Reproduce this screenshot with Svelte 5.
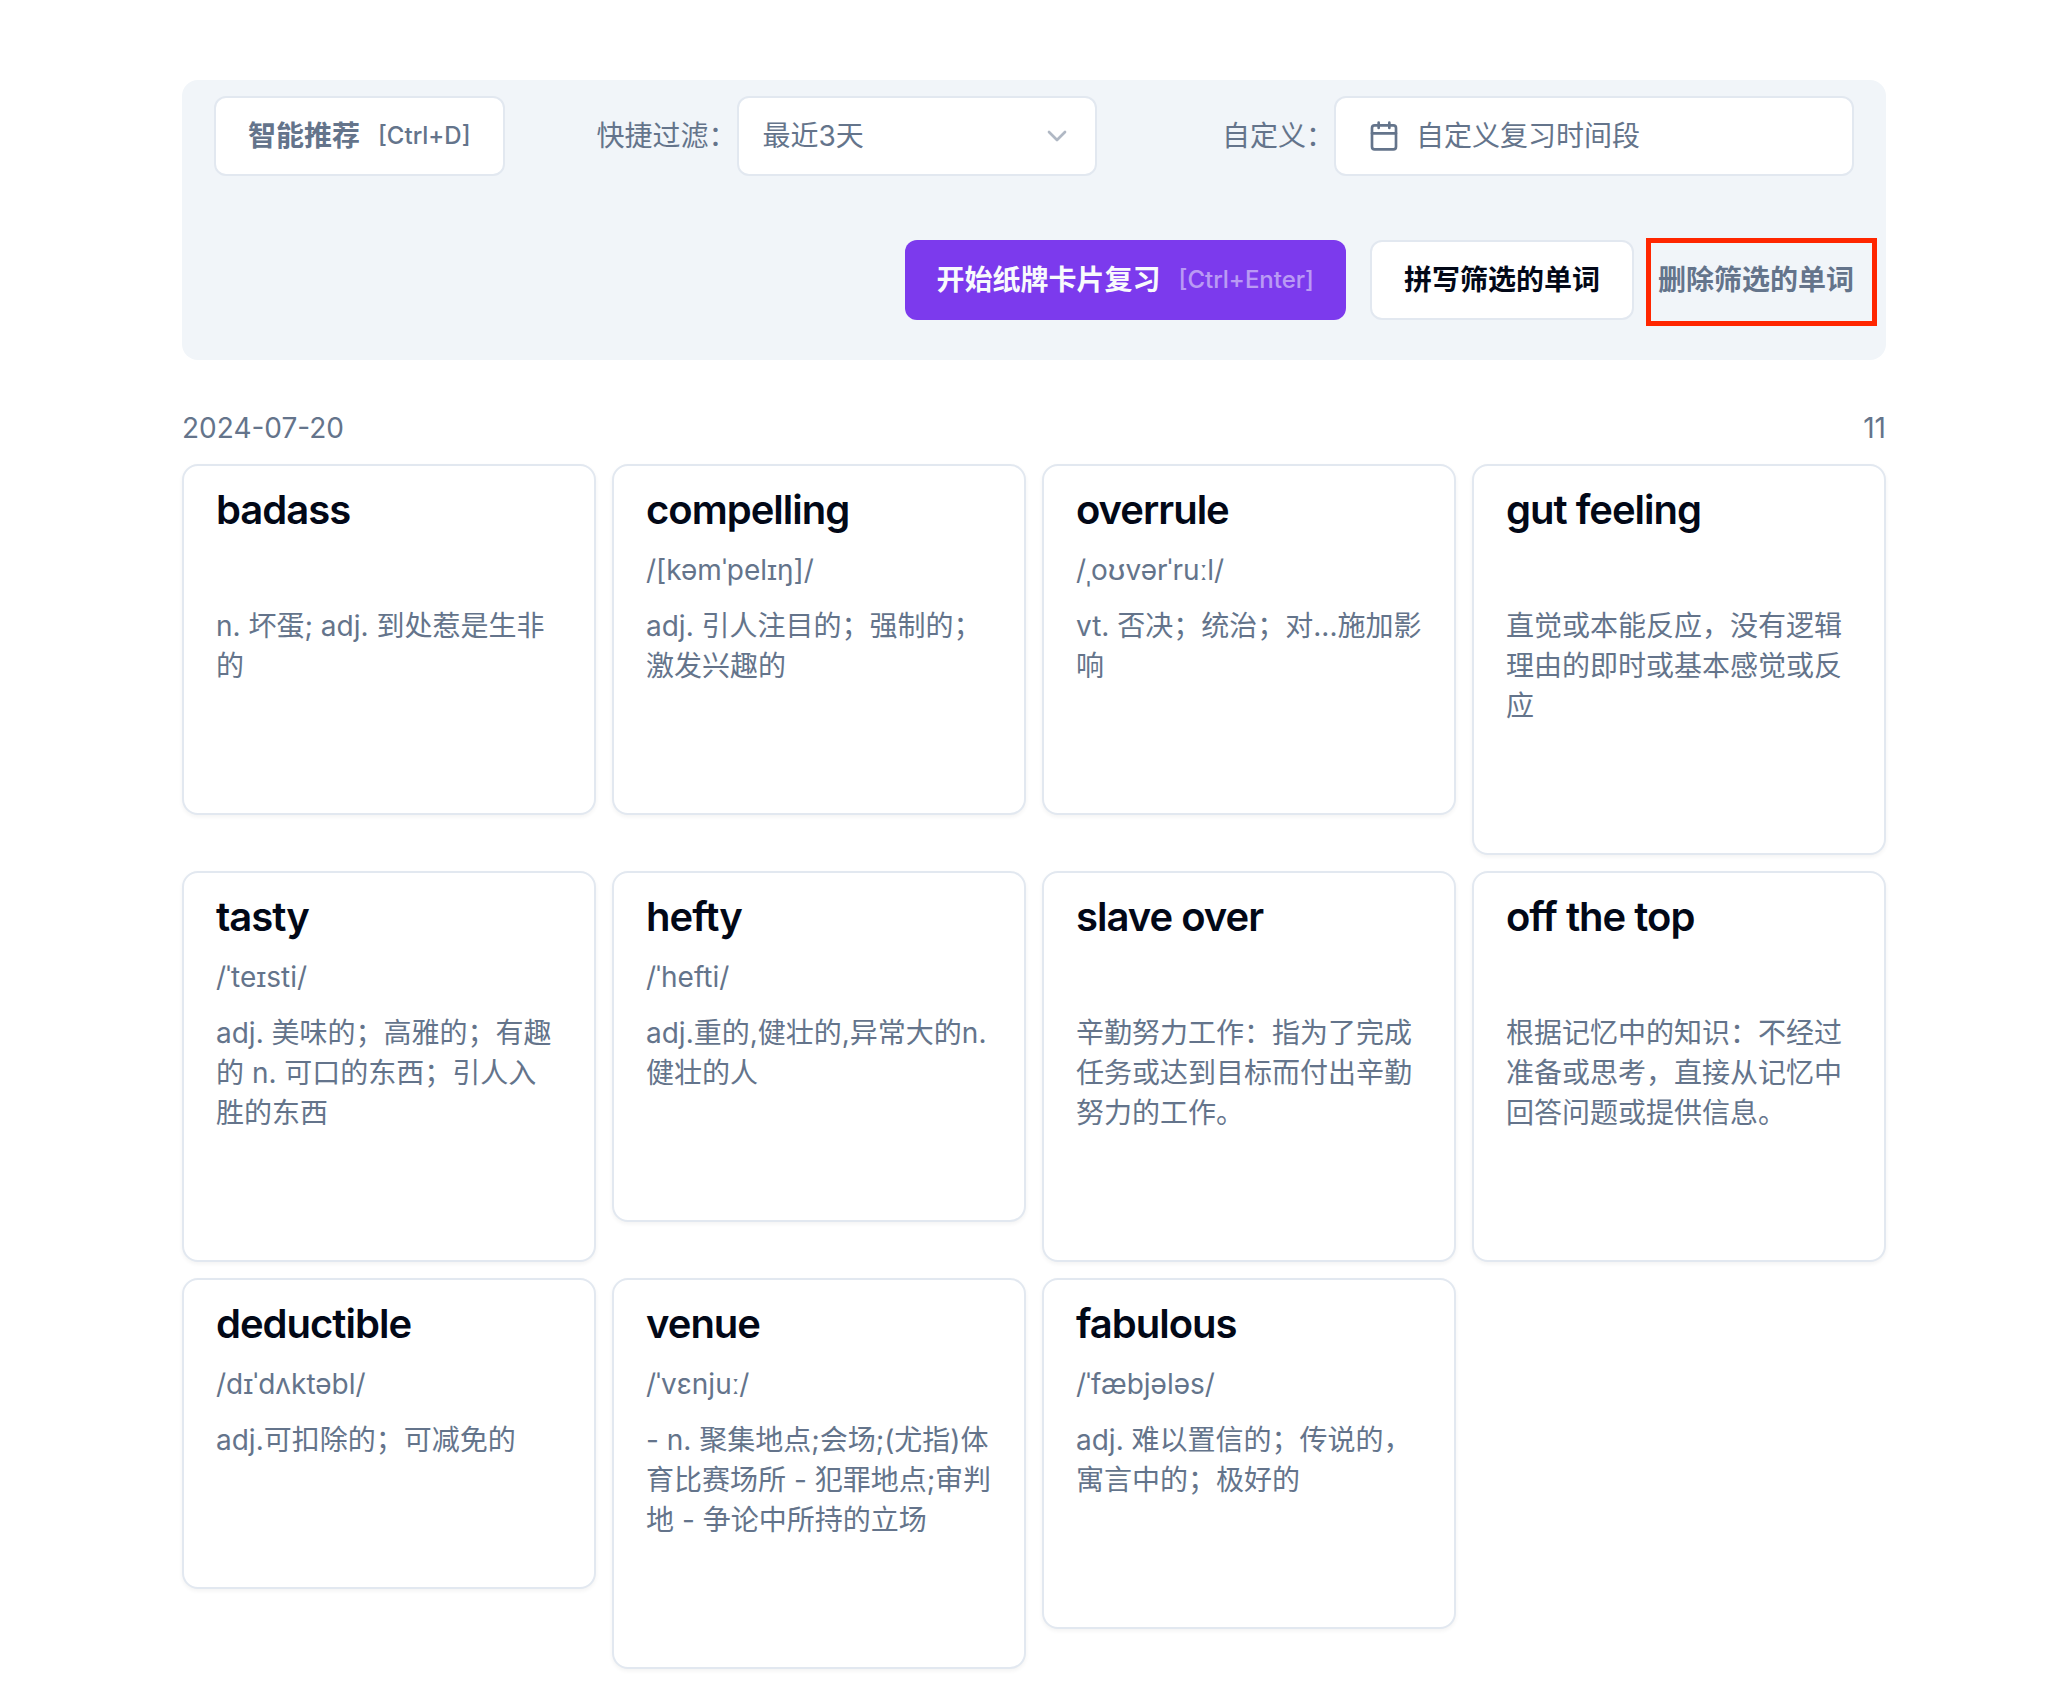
<script>
  let range = '3';

  const ranges = [
    { value: '1', label: '最近1天' },
    { value: '3', label: '最近3天' },
    { value: '7', label: '最近7天' }
  ];

  const groups = [
    {
      date: '2024-07-20',
      words: [
        { name: 'badass', phonetic: '', meaning: 'n. 坏蛋; adj. 到处惹是生非的' },
        { name: 'compelling', phonetic: '/[kəmˈpelɪŋ]/', meaning: 'adj. 引人注目的；强制的；激发兴趣的' },
        { name: 'overrule', phonetic: '/ˌoʊvərˈruːl/', meaning: 'vt. 否决；统治；对...施加影响' },
        { name: 'gut feeling', phonetic: '', meaning: '直觉或本能反应，没有逻辑理由的即时或基本感觉或反应' },
        { name: 'tasty', phonetic: '/ˈteɪsti/', meaning: 'adj. 美味的；高雅的；有趣的 n. 可口的东西；引人入胜的东西' },
        { name: 'hefty', phonetic: '/ˈhefti/', meaning: 'adj.重的,健壮的,异常大的n.健壮的人' },
        { name: 'slave over', phonetic: '', meaning: '辛勤努力工作：指为了完成任务或达到目标而付出辛勤努力的工作。' },
        { name: 'off the top', phonetic: '', meaning: '根据记忆中的知识：不经过准备或思考，直接从记忆中回答问题或提供信息。' },
        { name: 'deductible', phonetic: '/dɪˈdʌktəbl/', meaning: 'adj.可扣除的；可减免的' },
        { name: 'venue', phonetic: '/ˈvɛnjuː/', meaning: '- n. 聚集地点;会场;(尤指)体育比赛场所 - 犯罪地点;审判地 - 争论中所持的立场' },
        { name: 'fabulous', phonetic: '/ˈfæbjələs/', meaning: 'adj. 难以置信的；传说的，寓言中的；极好的' }
      ]
    }
  ];
</script>

<main class="page">
  <section class="toolbar">
    <div class="filters">
      <button class="btn outline muted" type="button">
        智能推荐 <span class="shortcut">[Ctrl+D]</span>
      </button>

      <div class="field">
        <label for="quick-range">快捷过滤：</label>
        <div class="select-wrap">
          <select id="quick-range" bind:value={range}>
            {#each ranges as r}
              <option value={r.value}>{r.label}</option>
            {/each}
          </select>
          <svg class="chevron" viewBox="0 0 24 24" aria-hidden="true">
            <path d="m6 9 6 6 6-6" />
          </svg>
        </div>
      </div>

      <div class="field custom">
        <label for="custom-range">自定义：</label>
        <button id="custom-range" class="date-btn" type="button">
          <svg viewBox="0 0 24 24" aria-hidden="true">
            <path d="M8 2v4M16 2v4M3 10h18" />
            <rect x="3" y="4" width="18" height="18" rx="2" />
          </svg>
          自定义复习时间段
        </button>
      </div>
    </div>

    <div class="actions">
      <button class="btn primary" type="button">
        开始纸牌卡片复习 <span class="shortcut">[Ctrl+Enter]</span>
      </button>
      <button class="btn outline" type="button">拼写筛选的单词</button>
      <div class="marked">
        <button class="btn link muted" type="button">删除筛选的单词</button>
        <span class="marker"></span>
      </div>
    </div>
  </section>

  {#each groups as group}
    <section class="group">
      <header>
        <span>{group.date}</span>
        <span>{group.words.length}</span>
      </header>
      <div class="cards">
        {#each group.words as word}
          <article class="card">
            <h3>{word.name}</h3>
            <p class="phonetic">{word.phonetic}</p>
            <p>{word.meaning}</p>
          </article>
        {/each}
      </div>
    </section>
  {/each}
</main>

<style>
  :global(body) {
    background: #fff;
  }

  .page {
    padding: 80px 176px 28px 182px;
    font-family: Inter, "Noto Sans CJK SC", sans-serif;
    font-size: 28px;
    line-height: 40px;
    color: #64748b;
  }

  .page * {
    box-sizing: border-box;
  }

  .toolbar {
    display: flex;
    flex-direction: column;
    gap: 64px;
    padding: 16px 32px 40px;
    background: #f1f5f9;
    border-radius: 16px;
  }

  .filters {
    display: flex;
    align-items: center;
    gap: 92px;
  }

  .actions {
    display: flex;
    justify-content: flex-end;
    gap: 24px;
  }

  button, select {
    font: inherit;
    color: inherit;
    cursor: pointer;
  }

  .btn {
    display: flex;
    align-items: center;
    gap: 18px;
    height: 80px;
    padding: 0 32px;
    border: 0;
    border-radius: 12px;
    font-weight: 600;
    white-space: nowrap;
  }

  .btn.outline {
    background: #fff;
    border: 2px solid #e2e8f0;
    color: #020817;
  }

  .btn.primary {
    background: #7c3aed;
    color: #f8fafc;
  }

  .btn.primary .shortcut {
    opacity: 0.5;
  }

  .btn.link {
    padding: 0;
    background: none;
  }

  .btn.muted {
    color: #64748b;
  }

  .shortcut {
    font-size: 24px;
    font-weight: 500;
  }

  .field {
    display: flex;
    align-items: center;
    white-space: nowrap;
  }

  .custom {
    margin-left: auto;
  }

  .select-wrap {
    display: grid;
    align-items: center;
    width: 360px;
  }

  .select-wrap > * {
    grid-area: 1 / 1;
  }

  select {
    width: 100%;
    height: 80px;
    padding: 0 24px;
    appearance: none;
    background: #fff;
    border: 2px solid #e2e8f0;
    border-radius: 12px;
  }

  svg {
    width: 32px;
    height: 32px;
    fill: none;
    stroke: currentColor;
    stroke-width: 2;
    stroke-linecap: round;
    stroke-linejoin: round;
  }

  .chevron {
    justify-self: end;
    margin-right: 24px;
    opacity: 0.5;
    pointer-events: none;
  }

  .date-btn {
    display: flex;
    align-items: center;
    gap: 16px;
    width: 520px;
    height: 80px;
    padding: 0 32px;
    background: #fff;
    border: 2px solid #e2e8f0;
    border-radius: 12px;
  }

  .marked {
    position: relative;
  }

  /* frame drawn over the delete action */
  .marker {
    position: absolute;
    inset: -2px -23px -6px -12px;
    border: 5px solid #ff2600;
    pointer-events: none;
  }

  .group {
    margin-top: 48px;
  }

  .group header {
    display: flex;
    justify-content: space-between;
    margin-bottom: 16px;
  }

  .cards {
    display: grid;
    grid-template-columns: repeat(4, 1fr);
    align-items: start;
    gap: 16px;
  }

  .card {
    padding: 16px 32px 127px;
    background: #fff;
    border: 2px solid #e2e8f0;
    border-radius: 16px;
    box-shadow: 0 2px 4px rgba(0, 0, 0, 0.05);
  }

  h3 {
    margin: 0 0 12px;
    font-size: 40px;
    font-weight: 600;
    line-height: 56px;
    letter-spacing: -0.025em;
    color: #020817;
  }

  p {
    margin: 0;
  }

  .phonetic {
    min-height: 40px;
    margin-bottom: 16px;
  }
</style>
